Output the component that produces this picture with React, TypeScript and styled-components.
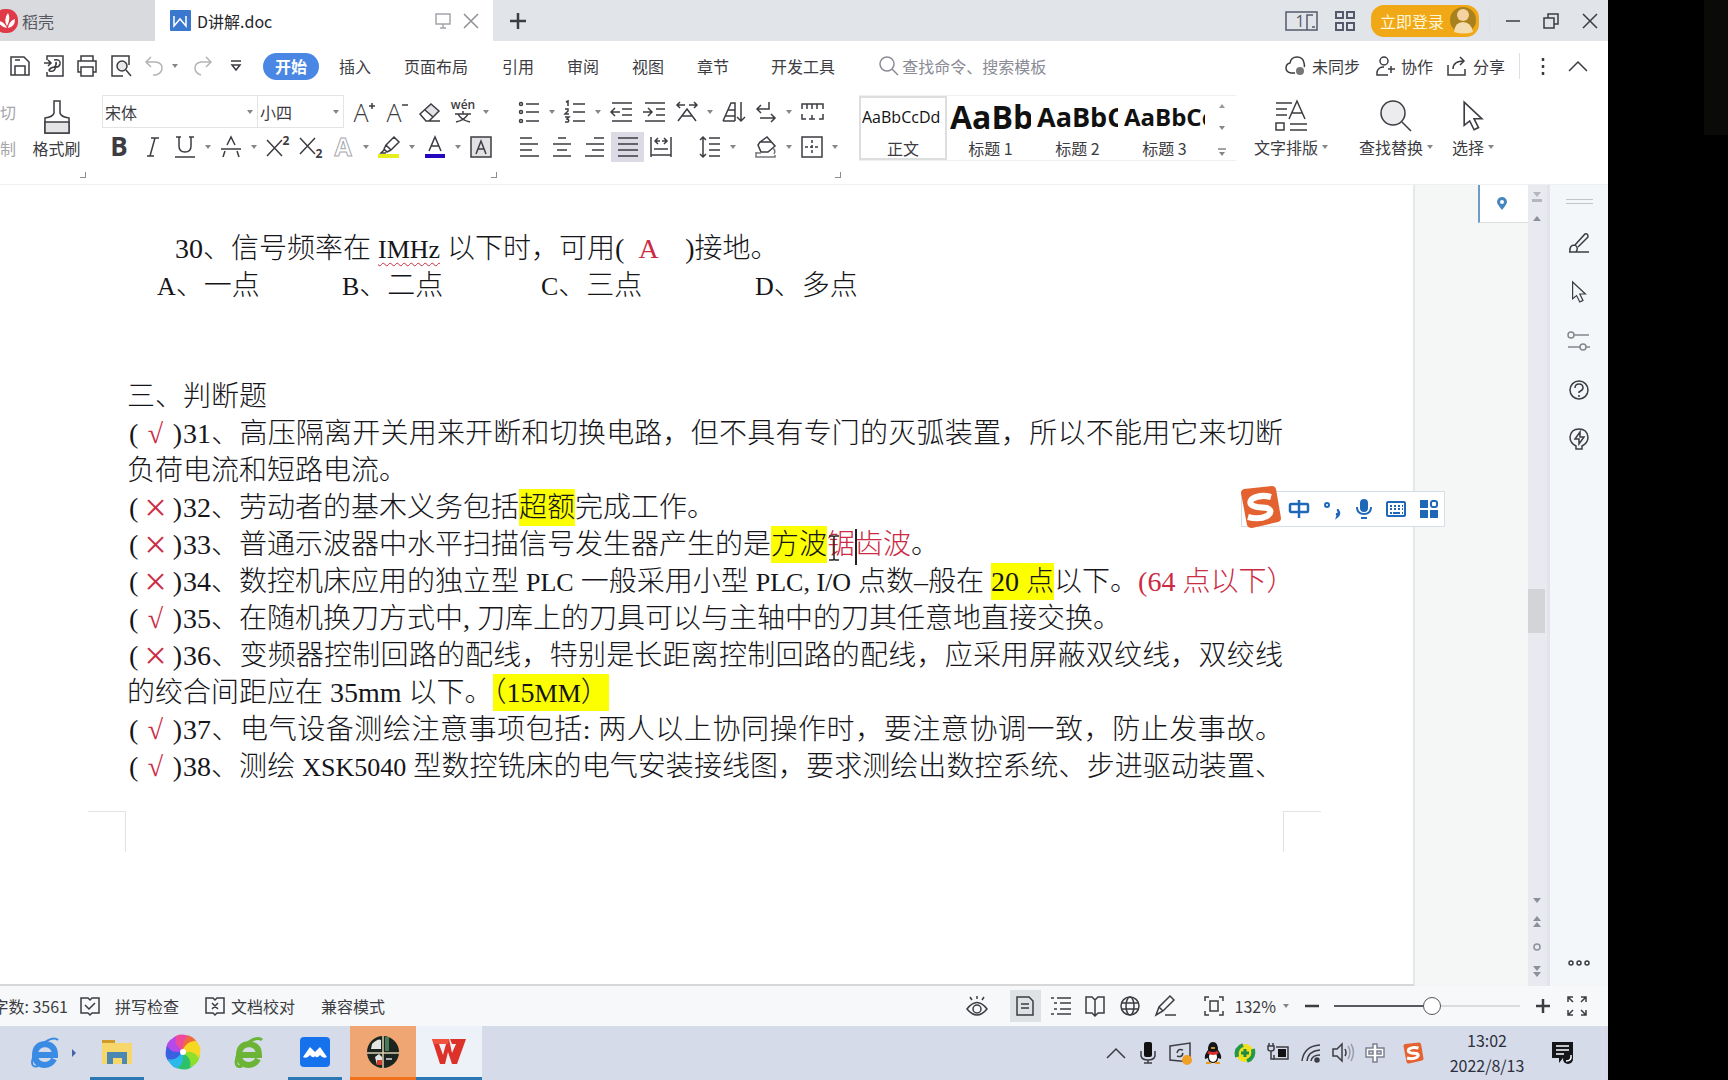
import React from "react";
import styled, { createGlobalStyle, css } from "styled-components";

const UI = '"Noto Sans CJK SC", "Noto Sans", sans-serif';
const INK = "#3c3c42";
const RED = "#cc2b44";

const Global = createGlobalStyle`
  * { box-sizing: border-box; }
  body { margin: 0; background: #000; font-family: ${UI}; font-size: 16px; line-height: 24px; color: ${INK}; }
  button, select, input { font: inherit; color: inherit; }
  button { border: 0; padding: 0; background: none; white-space: nowrap; cursor: pointer; }
  svg { display: block; flex: none; fill: none; stroke: currentColor; stroke-width: 1.5; overflow: visible; }
`;

/* ---------- shared pieces ---------- */

const Screen = styled.div`
  display: flex;
  min-height: 100vh;
  overflow: hidden;
  background: #000;
`;
const Desktop = styled.div`
  flex: 1;
  min-width: 0;
  display: flex;
  flex-direction: column;
  background: #fff;
`;
const Bezel = styled.aside`
  width: 120px;
  display: flex;
  justify-content: flex-end;
  background: #000;
`;
const BezelStrip = styled.div`
  width: 24px;
  height: 135px;
  background: #0a0a08;
`;
const Spacer = styled.div`
  flex: 1;
`;
const Gap = styled.div<{ $w: number }>`
  width: ${(p) => p.$w}px;
  flex: none;
`;
const Rule = styled.div<{ $h: number }>`
  width: 1px;
  height: ${(p) => p.$h}px;
  flex: none;
  background: #dddfe4;
`;
const Caret = styled.i`
  flex: none;
  width: 0;
  height: 0;
  border: 3px solid transparent;
  border-top: 4px solid #85858c;
  border-bottom: 0;
`;
const IconButton = styled.button<{ $w?: number; $tone?: string }>`
  flex: none;
  width: ${(p) => p.$w ?? 33}px;
  height: 30px;
  display: flex;
  align-items: center;
  justify-content: center;
  color: ${(p) => p.$tone ?? INK};
`;

type SvgProps = { w?: number; h?: number; children: React.ReactNode; sw?: number };
const Svg = ({ w = 22, h = 22, sw = 1.5, children }: SvgProps) => (
  <svg width={w} height={h} viewBox={`0 0 ${w} ${h}`} style={{ strokeWidth: sw }} aria-hidden="true">
    {children}
  </svg>
);

/* ---------- title bar ---------- */

const TitleBar = styled.header`
  height: 41px;
  display: flex;
  align-items: center;
  background: #e1e4e8;
  color: #55565f;
`;
const Tab = styled.div<{ $active?: boolean }>`
  align-self: stretch;
  display: flex;
  align-items: center;
  ${(p) =>
    p.$active
      ? css`
          width: 338px;
          gap: 8px;
          padding: 0 12px 0 15px;
          background: #fff;
          color: #26262b;
        `
      : css`
          width: 155px;
          gap: 4px;
          background: #d9dadd;
        `}
`;
const TabName = styled.button`
  display: flex;
  align-items: center;
  gap: 6px;
  line-height: 24px;
`;
const DocerLogo = styled.span`
  width: 18px;
  overflow: hidden;
  display: flex;
  justify-content: flex-end;
`;
const Login = styled.button`
  width: 108px;
  height: 32px;
  padding: 0 2px 0 9px;
  display: flex;
  align-items: center;
  justify-content: space-between;
  border-radius: 13px;
  background: #f0a816;
  color: #fff6d8;
`;

/* ---------- menu row ---------- */

const MenuBar = styled.nav`
  height: 52px;
  display: flex;
  align-items: center;
  padding-bottom: 2px;
`;
const MenuItem = styled.button<{ $active?: boolean }>`
  flex: none;
  height: 27px;
  line-height: 24px;
  padding: 0 12px;
  border-radius: 14px;
  ${(p) =>
    p.$active &&
    css`
      background: #4a87e4;
      color: #fff;
      font-weight: 700;
    `}
`;
const SearchBox = styled.label`
  display: flex;
  align-items: center;
  gap: 3px;
  color: #8b8b95;
  input {
    width: 180px;
    border: 0;
    padding: 0;
    outline: 0;
    background: none;
  }
  input::placeholder {
    color: #8b8b95;
    opacity: 1;
  }
`;
const Action = styled.button`
  display: flex;
  align-items: center;
  gap: 6px;
`;

/* ---------- ribbon ---------- */

const Ribbon = styled.section`
  height: 92px;
  display: flex;
  border-bottom: 1px solid #eeeff0;
`;
const Group = styled.div`
  flex: none;
  display: flex;
  flex-direction: column;
  padding-top: 1px;
`;
const PainterGroup = styled(Group)`
  width: 59px;
`;
const ToolRow = styled.div`
  display: flex;
  align-items: center;
  height: 35px;
`;
const ToolBox = styled.div`
  display: flex;
  align-items: center;
  flex: none;
`;
const ToolButton = styled.button<{ $on?: boolean; $tone?: string }>`
  width: 33px;
  height: 30px;
  display: flex;
  align-items: center;
  justify-content: center;
  color: ${(p) => p.$tone ?? INK};
  background: ${(p) => (p.$on ? "#dcdae5" : "none")};
`;
const CaretCell = styled.span`
  width: 13px;
  display: flex;
  justify-content: center;
`;
const Corner = styled.span`
  align-self: flex-end;
  width: 6px;
  height: 6px;
  margin-top: 8px;
  border: solid #8c8c92;
  border-width: 0 1px 1px 0;
`;
const Combo = styled.span<{ $w: number }>`
  width: ${(p) => p.$w}px;
  height: 33px;
  display: flex;
  align-items: center;
  padding-right: 4px;
  border: 1px solid #e2e4e6;
  & + & {
    border-left: 0;
  }
  select {
    flex: 1;
    min-width: 0;
    appearance: none;
    border: 0;
    padding: 0 2px;
    background: none;
    outline: 0;
  }
`;
const Clip = styled.div`
  width: 16px;
  display: flex;
  flex-direction: column;
  padding-top: 7px;
  gap: 12px;
  overflow: hidden;
  color: #a5a5aa;
`;
const ClipButton = styled.button`
  display: flex;
  justify-content: flex-end;
  height: 24px;
  line-height: 24px;
`;
const BigTool = styled.button`
  flex: none;
  display: flex;
  flex-direction: column;
  align-items: center;
  padding-top: 4px;
  height: 70px;
  color: ${INK};
`;
const BigIcon = styled.span`
  height: 38px;
  display: flex;
  align-items: center;
`;
const BigLabel = styled.span`
  display: flex;
  align-items: center;
  gap: 4px;
  line-height: 24px;
`;
const Gallery = styled.div`
  flex: none;
  display: flex;
  height: 66px;
  margin-top: 2px;
  border: solid #eeeff0;
  border-width: 1px 0;
`;
const StyleCard = styled.button<{ $on?: boolean }>`
  width: ${(p) => (p.$on ? 88 : 87)}px;
  padding: 0 3px;
  overflow: hidden;
  outline: ${(p) => (p.$on ? "2px solid #dcdfde" : "none")};
  outline-offset: -2px;
`;
const Sample = styled.span<{ $size: number; $bold?: boolean }>`
  display: block;
  height: 40px;
  line-height: 40px;
  overflow: hidden;
  text-align: left;
  color: #111;
  font-family: "Open Sans", "Noto Sans", sans-serif;
  font-size: ${(p) => p.$size}px;
  font-weight: ${(p) => (p.$bold ? 700 : 400)};
`;
const StyleName = styled.span`
  display: block;
  line-height: 22px;
`;
const GalleryArrows = styled.div`
  width: 28px;
  display: flex;
  flex-direction: column;
  align-items: center;
  justify-content: space-between;
  padding: 8px 0 4px;
  color: #85858c;
`;

/* ---------- document ---------- */

const Workspace = styled.main`
  flex: 1;
  display: flex;
  position: relative;
  background: #f5f7f7;
`;
const Paper = styled.article`
  flex: 1;
  min-width: 0;
  display: flex;
  flex-direction: column;
  background: #fff;
  border-right: 2px solid #e6e7e7;
  border-bottom: 2px solid #d6d7d6;
`;
const Body = styled.div`
  padding: 45px 130px 26px 127px;
  font-family: "Liberation Serif", "Noto Sans CJK SC", serif;
  font-size: 28px;
  font-weight: 300;
  color: #16161a;
`;
const Line = styled.p<{ $fill?: boolean; $indent?: number }>`
  margin: 0;
  height: 37px;
  line-height: 37px;
  white-space: pre;
  padding-left: ${(p) => p.$indent ?? 0}px;
  ${(p) =>
    p.$fill &&
    css`
      white-space: nowrap;
      text-align: justify;
      text-align-last: justify;
    `}
`;
const Heading = styled.h2`
  margin: 0;
  font: inherit;
  line-height: 37px;
`;
const Options = styled.div`
  display: grid;
  grid-template-columns: 185px 199px 214px 1fr;
  padding-left: 30px;
  height: 111px;
  line-height: 37px;
`;
const Mark = styled.span`
  display: inline-flex;
  height: 37px;
  vertical-align: top;
  width: 56px;
  justify-content: space-between;
  align-items: center;
  padding: 0 1px 0 2px;
`;
const Red = styled.span`
  color: ${RED};
`;
const Cross = styled(Red)`
  font-size: 40px;
  line-height: 37px;
`;
const Latin = styled.span<{ $wavy?: boolean }>`
  font-size: 26px;
  ${(p) =>
    p.$wavy &&
    css`
      text-decoration: underline wavy ${RED} 1px;
      text-underline-offset: 4px;
    `}
`;
const Hi = styled.mark`
  padding: 3px 0;
  background: #fbff00;
  color: inherit;
`;
const CaretSpot = styled.span`
  position: relative;
`;
const TextCaret = styled.span`
  position: absolute;
  left: 28px;
  top: 0;
  width: 2px;
  height: 36px;
  background: #222;
`;
const Beam = styled.span`
  position: absolute;
  left: 2px;
  top: 6px;
  color: #222;
`;
const Crops = styled.div`
  display: flex;
  justify-content: space-between;
  padding: 0 92px 0 88px;
`;
const Crop = styled.span<{ $side: "left" | "right" }>`
  width: 38px;
  height: 41px;
  border-top: 1px solid #e2e2e2;
  border-${(p) => (p.$side === "left" ? "right" : "left")}: 1px solid #e2e2e2;
`;
const Margin = styled.div`
  width: 113px;
  display: flex;
  justify-content: flex-end;
  align-items: flex-start;
`;
const PinPanel = styled.button`
  width: 50px;
  height: 38px;
  padding-right: 4px;
  display: flex;
  align-items: center;
  justify-content: center;
  background: #fff;
  border-left: 2px solid #6d9cc8;
  border-bottom: 1px solid #dcdfe2;
`;
const ScrollBar = styled.div`
  width: 22px;
  display: flex;
  flex-direction: column;
  align-items: center;
  padding: 7px 2px 7px 0;
  background: #e9eaf0;
  border-right: 3px solid #e2e4ec;
  color: #8d8f9c;
`;
const Thumb = styled.div`
  width: 17px;
  height: 44px;
  background: #d3d4d8;
`;
const Track = styled.div<{ $grow: number }>`
  flex: ${(p) => p.$grow};
`;
const ScrollMarks = styled.div`
  display: flex;
  flex-direction: column;
  align-items: center;
  gap: 12px;
`;
const SideBar = styled.aside`
  width: 58px;
  display: flex;
  flex-direction: column;
  align-items: center;
  padding: 14px 0 8px;
  background: #f4f7fa;
`;
const Grip = styled.span`
  width: 27px;
  height: 5px;
  border: solid #c3c5c9;
  border-width: 1px 0;
`;
const SideTools = styled.div`
  display: flex;
  flex-direction: column;
  gap: 19px;
  margin-top: 24px;
`;

const Ime = styled.div`
  position: absolute;
  right: 163px;
  top: 306px;
  display: flex;
  align-items: center;
  width: 204px;
  height: 36px;
  padding-left: 40px;
  border: 1px solid #d5dde6;
  background: #fff;
`;
const ImeLogo = styled.span`
  position: absolute;
  left: -4px;
  top: -7px;
`;

/* ---------- status bar ---------- */

const StatusBar = styled.footer`
  height: 40px;
  display: flex;
  align-items: center;
  background: #f6f8f9;
  overflow: hidden;
`;
const Count = styled.span`
  width: 68px;
  display: flex;
  justify-content: flex-end;
  white-space: nowrap;
`;
const StatusItem = styled.button`
  flex: none;
  display: flex;
  align-items: center;
  height: 36px;
`;
const ViewButton = styled(IconButton)<{ $on?: boolean }>`
  height: 32px;
  background: ${(p) => (p.$on ? "#dfe2e5" : "none")};
`;
const Zoom = styled.input`
  appearance: none;
  width: 186px;
  height: 20px;
  margin: 0;
  background: linear-gradient(to right, #58585e 53%, #d9dcdf 53%) center / 100% 2px no-repeat;
  &::-webkit-slider-thumb {
    appearance: none;
    width: 18px;
    height: 18px;
    border: 1px solid #55555b;
    border-radius: 50%;
    background: #fff;
  }
`;

/* ---------- task bar ---------- */

const TaskBar = styled.footer`
  height: 54px;
  display: flex;
  align-items: stretch;
  padding-left: 12px;
  background: #d6dbea;
  color: #1c1f2b;
`;
const TaskButton = styled.button<{ $bg?: string; $line?: string; $full?: boolean }>`
  width: 66px;
  display: flex;
  flex-direction: column;
  align-items: center;
  justify-content: flex-end;
  background: ${(p) => p.$bg ?? "none"};
  &::after {
    content: "";
    width: ${(p) => (p.$full ? "100%" : "54px")};
    height: 3px;
    margin-top: 8px;
    background: ${(p) => p.$line ?? "transparent"};
  }
`;
const Tray = styled.div`
  display: flex;
  align-items: center;
`;
const Clock = styled.time`
  width: 108px;
  text-align: center;
  line-height: 25px;
  font-size: 16px;
  color: #2c2f3c;
`;

/* ---------- tools ---------- */

type ToolDef = { label: string; icon: React.ReactNode; caret?: boolean; on?: boolean; tone?: string };

const Tool = ({ label, icon, caret, on, tone }: ToolDef) => (
  <ToolBox>
    <ToolButton aria-label={label} $on={on} $tone={tone}>
      {icon}
    </ToolButton>
    {caret && (
      <CaretCell>
        <Caret />
      </CaretCell>
    )}
  </ToolBox>
);

type LetterProps = { x: number; y: number; size: number; weight?: number; children: string };
const Letter = ({ x, y, size, weight = 400, children }: LetterProps) => (
  <text
    x={x}
    y={y}
    fontSize={size}
    fontWeight={weight}
    fontFamily="Open Sans, sans-serif"
    textAnchor="middle"
    fill="currentColor"
    stroke="none"
  >
    {children}
  </text>
);

const fontTop: ToolDef[] = [
  {
    label: "增大字号",
    icon: (
      <Svg>
        <Letter x={8} y={21} size={25} weight={300}>A</Letter>
        <path d="M16 5h6M19 2v6" />
      </Svg>
    ),
  },
  {
    label: "减小字号",
    icon: (
      <Svg>
        <Letter x={8} y={21} size={25} weight={300}>A</Letter>
        <path d="M16 4h6" />
      </Svg>
    ),
  },
  {
    label: "清除格式",
    icon: (
      <Svg>
        <path d="M12 3 20 10 13 16 6 9z" fill="#e4e4e6" stroke="none" />
        <path d="M1 13 12 3l8 7-10 10H7zM6 9l8 7M8 20h13" />
      </Svg>
    ),
  },
  {
    label: "拼音指南",
    caret: true,
    icon: (
      <Svg>
        <Letter x={11} y={8} size={12} weight={600}>wén</Letter>
        <path d="M3 13h16M11 10v3M6 13q3 6 12 8M16 13q-3 6-12 8" />
      </Svg>
    ),
  },
];

const fontBottom: ToolDef[] = [
  { label: "加粗", icon: <Svg><Letter x={11} y={20} size={26} weight={700}>B</Letter></Svg> },
  { label: "倾斜", icon: <Svg><path d="M10 2h8M6 20h7M14 2 9 20" /></Svg> },
  { label: "下划线", caret: true, icon: <Svg><path d="M5 1v9q0 6 6 6t6-6V1M2 1h5M15 1h5M1 21h20" /></Svg> },
  {
    label: "删除线",
    caret: true,
    icon: <Svg><path d="M7 9l4-8 4 8M1 13h20M5 15l-2 6M17 15l2 6" /></Svg>,
  },
  { label: "上标", icon: <Svg w={24}><path d="M2 4l15 16M17 4 2 20" /><Letter x={21} y={9} size={12} weight={700}>2</Letter></Svg> },
  { label: "下标", icon: <Svg w={24}><path d="M2 2l15 16M17 2 2 18" /><Letter x={21} y={22} size={12} weight={700}>2</Letter></Svg> },
  {
    label: "文字效果",
    caret: true,
    tone: "#a9a9ae",
    icon: (
      <Svg>
        <text x="11" y="20" fontSize="25" fontWeight="700" fontFamily="Open Sans" textAnchor="middle" fill="#fff" strokeWidth="1">A</text>
      </Svg>
    ),
  },
  {
    label: "突出显示",
    caret: true,
    icon: (
      <Svg>
        <path d="M0 18h21v4H0z" fill="#e6ee1c" stroke="none" />
        <path d="M8 9l8-8 5 5-8 8zM8 9l-2 4 3 3 4-2M6 14l-3 3h5" />
      </Svg>
    ),
  },
  {
    label: "字体颜色",
    caret: true,
    icon: (
      <Svg>
        <path d="M1 18h20v4H1z" fill="#2408c0" stroke="none" />
        <path d="M5 15l6-14 6 14M7 10h8" />
      </Svg>
    ),
  },
  {
    label: "字符底纹",
    icon: (
      <Svg>
        <path d="M1 1h20v20H1z" fill="#e2e2e4" />
        <path d="M6 18l5-13 5 13M8 13h6" />
      </Svg>
    ),
  },
];

const paraTop: ToolDef[] = [
  {
    label: "项目符号",
    caret: true,
    icon: <Svg><path d="M8 3h13M8 11h13M8 20h13" /><circle cx="3" cy="3" r="1.5" /><circle cx="3" cy="11" r="1.5" /><circle cx="3" cy="20" r="1.5" /></Svg>,
  },
  {
    label: "编号",
    caret: true,
    icon: (
      <Svg>
        <path d="M9 3h12M9 11h12M9 20h12M2 1l2-1v5M1 8h3v2L1 13h4M1 16h4l-2 2q3 1 1 3H1" />
      </Svg>
    ),
  },
  { label: "减少缩进", icon: <Svg><path d="M2 2h20M12 8h10M12 14h10M2 20h20M1 11h9M5 7l-4 4 4 4" /></Svg> },
  { label: "增加缩进", icon: <Svg><path d="M2 2h20M13 8h9M13 14h9M2 20h20M0 11h9M5 7l4 4-4 4" /></Svg> },
  { label: "中文版式", caret: true, icon: <Svg><path d="M2 20 11 8l9 12M6 15h10M1 4h8M4 1 1 4l3 3M21 4h-8M18 1l3 3-3 3" /></Svg> },
  { label: "排序", icon: <Svg><path d="M1 20 9 2h4v18M3 15h10M6 9h7M1 20h12M19 1v19M15 16l4 4 4-4" /></Svg> },
  { label: "换行", caret: true, icon: <Svg><path d="M14 1v7H2M6 4 2 8l4 4M5 17h15M16 13l4 4-4 4" /></Svg> },
  { label: "标尺", icon: <Svg><path d="M1 8V3h21v5M6 3v5M11 3v5M16 3v5M1 13v5h4M18 18h4v-5M8 18h6M11 14v4" /></Svg> },
];

const alignTools: ToolDef[] = [
  { label: "左对齐", icon: <Svg><path d="M2 2h12M2 8h18M2 14h12M2 20h19" /></Svg> },
  { label: "居中", icon: <Svg><path d="M7 2h8M2 8h18M6 14h10M2 20h18" /></Svg> },
  { label: "右对齐", icon: <Svg><path d="M10 2h10M2 8h18M8 14h12M1 20h19" /></Svg> },
  { label: "两端对齐", on: true, icon: <Svg><path d="M1 2h20M1 8h20M1 14h20M1 20h20" /></Svg> },
  { label: "分散对齐", icon: <Svg><path d="M1 1v20M21 1v20M4 13h14M1 19h20M5 5h5M12 5h5M8 2 5 5l3 3M14 2l3 3-3 3" /></Svg> },
];
const spaceTools: ToolDef[] = [
  { label: "行距", caret: true, icon: <Svg><path d="M4 1v20M1 4l3-3 3 3M1 18l3 3 3-3M10 2h11M10 8h11M10 14h11M10 20h11" /></Svg> },
];
const fillTools: ToolDef[] = [
  { label: "底纹颜色", caret: true, icon: <Svg><path d="M5 6 12 1l8 9-7 6H6L3 9l2-3h11" /><path d="M18 12q3 3 1 6M1 16v5h19v-2M1 17h5" stroke="#77777c" /></Svg> },
  { label: "边框", caret: true, icon: <Svg><path d="M1 1h20v20H1z" /><path d="M11 4v14M4 11h14" strokeDasharray="3 2" /></Svg> },
];

const menu = ["插入", "页面布局", "引用", "审阅", "视图", "章节", "开发工具"];
const menuGaps = [8, 9, 10, 9, 9, 9, 18];

const Arrow = ({ size = 22 }: { size?: number }) => (
  <svg width={size} height={Math.round(size * 1.35)} viewBox="0 0 20 27" aria-hidden="true">
    <path d="M2 1v21l5-4 4 8 4-2-4-8h7z" />
  </svg>
);

const Sogou = ({ size }: { size: number }) => (
  <svg width={size} height={size} viewBox="0 0 44 44" aria-hidden="true">
    <path d="M3 8q0-3 3-4L34 1q3 0 4 3l5 29q0 3-3 4L14 43q-4 0-5-3z" fill="#e3622f" stroke="none" />
    <path d="M33 12q-11-3-19 2-5 6 5 8l10 1q7 3 0 8-8 4-19 1" stroke="#fff" style={{ strokeWidth: 6 }} />
  </svg>
);

const Zhong = ({ color }: { color: string }) => (
  <svg width="20" height="20" viewBox="0 0 20 20" style={{ strokeWidth: 2.5 }} stroke={color} aria-hidden="true">
    <rect x="1" y="5" width="18" height="8" rx="1" />
    <path d="M10 1v18" />
  </svg>
);

/* ---------- page ---------- */

const Title = () => (
  <TitleBar>
    <Tab>
      <DocerLogo>
        <svg width="24" height="24" viewBox="0 0 24 24" aria-hidden="true">
          <rect width="24" height="24" rx="11" fill="#e03a48" stroke="none" />
          <path d="M13 19Q6 18 4 12q6 0 9 7zM13 17Q9 10 14 4q3 6-1 13zM14 19q1-7 7-9 0 8-7 9z" fill="#fff" stroke="none" />
        </svg>
      </DocerLogo>
      <TabName>稻壳</TabName>
    </Tab>
    <Tab $active>
      <TabName>
        <svg width="21" height="21" viewBox="0 0 21 21" aria-hidden="true">
          <rect width="21" height="21" rx="1" fill="#3a78d0" stroke="none" />
          <path d="M4 6v10l6-7 6 7V6" stroke="#fff" />
        </svg>
        D讲解.doc
      </TabName>
      <Spacer />
      <IconButton $w={20} $tone="#a4a5aa" aria-label="在窗口中显示">
        <Svg w={16} h={16}><path d="M1 1h14v10H1zM8 11v4M5 15h6" /></Svg>
      </IconButton>
      <IconButton $w={20} $tone="#8f9096" aria-label="关闭标签">
        <Svg w={16} h={16}><path d="M1 1l14 14M15 1 1 15" /></Svg>
      </IconButton>
    </Tab>
    <Gap $w={8} />
    <IconButton aria-label="新建标签">
      <Svg w={16} h={16} sw={2.5}><path d="M8 0v16M0 8h16" /></Svg>
    </IconButton>
    <Spacer />
    <IconButton $w={34} $tone="#55586a" aria-label="布局">
      <Svg w={33} h={20}>
        <path d="M1 1h31v18H1zM22 19V4h6M27 16h3" />
        <Letter x={15} y={16} size={16}>1</Letter>
      </Svg>
    </IconButton>
    <Gap $w={10} />
    <IconButton $tone="#55586a" aria-label="应用">
      <Svg w={20} h={20} sw={2}><path d="M1 1h7v6H1zM12 1h7v6h-7zM1 12h7v7H1zM12 12h7v7h-7z" /></Svg>
    </IconButton>
    <Gap $w={10} />
    <Login>
      立即登录
      <svg width="27" height="27" viewBox="0 0 27 27" aria-hidden="true">
        <circle cx="13" cy="13" r="13" fill="#a8801c" stroke="none" />
        <circle cx="13" cy="8" r="6" fill="#f4d3a0" stroke="none" />
        <path d="M4 25q1-10 9-10t10 10q-9 3-19 0z" fill="#f3dcae" stroke="none" />
      </svg>
    </Login>
    <Gap $w={10} />
    <Rule $h={24} />
    <Gap $w={6} />
    <IconButton aria-label="最小化"><Svg w={14} h={16}><path d="M0 8h14" /></Svg></IconButton>
    <Gap $w={4} />
    <IconButton $w={36} aria-label="还原"><Svg w={16} h={16}><path d="M1 5h10v10H1zM5 5V1h10v10h-4" /></Svg></IconButton>
    <Gap $w={4} />
    <IconButton aria-label="关闭"><Svg w={14} h={14}><path d="M0 0l14 14M14 0 0 14" /></Svg></IconButton>
    <Gap $w={2} />
  </TitleBar>
);

const Menu = () => (
  <MenuBar>
    <Gap $w={3} />
    <IconButton aria-label="保存"><Svg w={20} h={20}><path d="M1 1h13l5 5v13H1zM5 19v-9h10v9M5 4h5" /></Svg></IconButton>
    <IconButton $w={36} aria-label="输出为PDF">
      <Svg w={20}><path d="M3 5V1h16v20H3v-4M0 8h7M4 5l3 3-3 3" /><path d="M10 5q7-1 6 4-1 4-6 3 3-2 2-5 0 8-3 9-4 1-4-1 2-3 6-3" /></Svg>
    </IconButton>
    <IconButton $w={30} aria-label="打印"><Svg w={20}><path d="M4 6V1h12v5M4 17H1V6h18v11h-3M4 12h12v9H4z" /></Svg></IconButton>
    <IconButton $w={38} aria-label="打印预览"><Svg w={20}><path d="M18 10V1H1v20h11M15 15l5 6" /><circle cx="11" cy="11" r="5" fill="#e8e8ea" /></Svg></IconButton>
    <IconButton $w={28} $tone="#b4b4b8" aria-label="撤销"><Svg w={18} h={20}><path d="M1 6h10q6 1 6 6t-6 7H8M6 1 1 6l5 5" /></Svg></IconButton>
    <Gap $w={4} />
    <Caret />
    <Gap $w={8} />
    <IconButton $tone="#b4b4b8" aria-label="恢复"><Svg w={18} h={20}><path d="M17 6H7q-6 1-6 6t6 7M12 1l5 5-5 5" /></Svg></IconButton>
    <IconButton aria-label="自定义工具栏"><Svg w={10} h={10}><path d="M0 0h10M1 4h8l-4 5z" /></Svg></IconButton>
    <Gap $w={11} />
    <MenuItem $active>开始</MenuItem>
    {menu.map((m, i) => (
      <React.Fragment key={m}>
        <Gap $w={menuGaps[i]} />
        <MenuItem>{m}</MenuItem>
      </React.Fragment>
    ))}
    <Gap $w={32} />
    <SearchBox>
      <Svg w={20} h={20}><circle cx="8" cy="8" r="7" /><path d="M13 13l6 6" /></Svg>
      <input placeholder="查找命令、搜索模板" aria-label="查找命令、搜索模板" />
    </SearchBox>
    <Spacer />
    <Action>
      <Svg w={21} h={20}>
        <path d="M10 17H6q-5-1-5-5t4-5q1-6 7-6t7 6q1 3 0 4" />
        <circle cx="15" cy="15" r="4" fill="#777" stroke="none" />
      </Svg>
      未同步
    </Action>
    <Gap $w={16} />
    <Action>
      <Svg w={19} h={20}><circle cx="8" cy="5" r="4" /><path d="M12 19H1v-3q1-5 7-5M12 13h7M15 10v7" /></Svg>
      协作
    </Action>
    <Gap $w={14} />
    <Action>
      <Svg w={20} h={20}><path d="M1 9v10h17v-6M6 13q0-8 11-8M13 1l4 4-4 4" /></Svg>
      分享
    </Action>
    <Gap $w={14} />
    <Rule $h={26} />
    <Gap $w={6} />
    <IconButton aria-label="更多"><Svg w={4} h={18} sw={2.5}><path d="M2 1v3M2 8v3M2 15v3" /></Svg></IconButton>
    <Gap $w={3} />
    <IconButton $w={32} aria-label="收起功能区"><Svg w={18} h={10}><path d="M0 10l9-9 9 9" /></Svg></IconButton>
    <Gap $w={14} />
  </MenuBar>
);

const RibbonBar = () => (
  <Ribbon>
    <Clip>
      <ClipButton>剪切</ClipButton>
      <ClipButton>复制</ClipButton>
    </Clip>
    <Gap $w={11} />
    <PainterGroup>
      <BigTool>
        <BigIcon>
          <Svg w={26} h={34}><path d="M10 1h6v12q1 4 9 5v15H1V18q8-1 9-5z" /><path d="M1 22h24v11H1z" fill="#e4e4e6" /></Svg>
        </BigIcon>
        <BigLabel>格式刷</BigLabel>
      </BigTool>
      <Corner />
    </PainterGroup>
    <Gap $w={16} />
    <Group>
      <ToolRow>
        <Combo $w={156}>
          <select aria-label="字体"><option>宋体</option></select>
          <Caret />
        </Combo>
        <Combo $w={86}>
          <select aria-label="字号"><option>小四</option></select>
          <Caret />
        </Combo>
        <Gap $w={3} />
        {fontTop.map((t) => <Tool key={t.label} {...t} />)}
      </ToolRow>
      <ToolRow>{fontBottom.map((t) => <Tool key={t.label} {...t} />)}</ToolRow>
      <Corner />
    </Group>
    <Gap $w={15} />
    <Group>
      <ToolRow>{paraTop.map((t) => <Tool key={t.label} {...t} />)}</ToolRow>
      <ToolRow>
        {alignTools.map((t) => <Tool key={t.label} {...t} />)}
        <Gap $w={16} />
        {spaceTools.map((t) => <Tool key={t.label} {...t} />)}
        <Gap $w={10} />
        {fillTools.map((t) => <Tool key={t.label} {...t} />)}
      </ToolRow>
      <Corner />
    </Group>
    <Gap $w={18} />
    <Gallery>
      <StyleCard $on><Sample $size={16}>AaBbCcDd</Sample><StyleName>正文</StyleName></StyleCard>
      <StyleCard><Sample $size={32} $bold>AaBb</Sample><StyleName>标题 1</StyleName></StyleCard>
      <StyleCard><Sample $size={27} $bold>AaBbC</Sample><StyleName>标题 2</StyleName></StyleCard>
      <StyleCard><Sample $size={24} $bold>AaBbCc</Sample><StyleName>标题 3</StyleName></StyleCard>
      <GalleryArrows>
        <Svg w={6} h={4}><path d="M0 4l3-4 3 4z" fill="#99999f" stroke="none" /></Svg>
        <Caret />
        <Svg w={8} h={8}><path d="M0 1h8" /><path d="M1 4h6l-3 4z" fill="currentColor" stroke="none" /></Svg>
      </GalleryArrows>
    </Gallery>
    <Gap $w={18} />
    <BigTool>
      <BigIcon><Svg w={32} h={32}><path d="M1 3h16M1 9h11M1 15h11M14 19l8-18 8 18M17 13h10M1 23h8v7H1zM15 24h17M15 30h17" /></Svg></BigIcon>
      <BigLabel>文字排版<Caret /></BigLabel>
    </BigTool>
    <Gap $w={31} />
    <BigTool>
      <BigIcon><Svg w={32} h={32}><circle cx="13" cy="13" r="12" fill="#ececee" /><path d="M22 22l9 9" /></Svg></BigIcon>
      <BigLabel>查找替换<Caret /></BigLabel>
    </BigTool>
    <Gap $w={19} />
    <BigTool>
      <BigIcon><Arrow /></BigIcon>
      <BigLabel>选择<Caret /></BigLabel>
    </BigTool>
  </Ribbon>
);

const Judge = ({ ok }: { ok?: boolean }) => (
  <Mark>
    <span>(</span>
    {ok ? <Red>√</Red> : <Cross>×</Cross>}
    <span>)</span>
  </Mark>
);

const Document = () => (
  <Paper>
    <Body>
      <Line $indent={48}>
        30、信号频率在 <Latin $wavy>IMHz</Latin> 以下时，可用({"  "}<Red>A</Red>{"    "})接地。
      </Line>
      <Options>
        <span><Latin>A</Latin>、一点</span>
        <span><Latin>B</Latin>、二点</span>
        <span><Latin>C</Latin>、三点</span>
        <span><Latin>D</Latin>、多点</span>
      </Options>
      <Heading>三、判断题</Heading>
      <Line $fill><Judge ok />31、高压隔离开关用来开断和切换电路，但不具有专门的灭弧装置，所以不能用它来切断</Line>
      <Line>负荷电流和短路电流。</Line>
      <Line><Judge />32、劳动者的基木义务包括<Hi>超额</Hi>完成工作。</Line>
      <Line>
        <Judge />33、普通示波器中水平扫描信号发生器产生的是<Hi>方波</Hi>
        <CaretSpot>
          <Red>锯齿波</Red>
          <Beam><Svg w={10} h={26}><path d="M0 1h4l1 1 1-1h4M5 2v22M0 25h4l1-1 1 1h4" /></Svg></Beam>
          <TextCaret />
        </CaretSpot>
        。
      </Line>
      <Line $fill>
        <Judge />34、数控机床应用的独立型 <Latin>PLC</Latin> 一般采用小型 <Latin>PLC, I/O</Latin> 点数–般在 <Hi>20 点</Hi>以下。<Red>(64 点以下）</Red>
      </Line>
      <Line><Judge ok />35、在随机换刀方式中, 刀库上的刀具可以与主轴中的刀其任意地直接交换。</Line>
      <Line $fill><Judge />36、变频器控制回路的配线，特别是长距离控制回路的配线，应采用屏蔽双纹线，双绞线</Line>
      <Line>的绞合间距应在 35mm 以下。<Hi>（15<Latin>MM</Latin>）</Hi></Line>
      <Line $fill><Judge ok />37、电气设备测绘注意事项包括: 两人以上协同操作时，要注意协调一致，防止发事故。</Line>
      <Line $fill><Judge ok />38、测绘 <Latin>XSK5040</Latin> 型数控铣床的电气安装接线图，要求测绘出数控系统、步进驱动装置、</Line>
    </Body>
    <Crops>
      <Crop $side="left" />
      <Crop $side="right" />
    </Crops>
  </Paper>
);

const Side = () => (
  <>
    <Margin>
      <PinPanel aria-label="定位">
        <Svg w={10} h={13}><path d="M5 13Q0 7 0 5a5 5 0 0 1 10 0q0 2-5 8z" fill="#4785bd" stroke="none" /><circle cx="5" cy="5" r="2" fill="#fff" stroke="none" /></Svg>
      </PinPanel>
    </Margin>
    <ScrollBar>
      <ScrollMarks>
        <Svg w={10} h={12}><path d="M1 0h8L5 5zM0 7h10v3H0z" fill="#b5b6bf" stroke="none" /></Svg>
        <Svg w={8} h={5}><path d="M0 5l4-5 4 5z" fill="currentColor" stroke="none" /></Svg>
      </ScrollMarks>
      <Track $grow={366} />
      <Thumb />
      <Track $grow={264} />
      <ScrollMarks>
        <Svg w={8} h={5}><path d="M0 0h8L4 5z" fill="currentColor" stroke="none" /></Svg>
        <Svg w={8} h={14}><path d="M0 6l4-5 4 5zM0 12l4-5 4 5z" fill="currentColor" stroke="none" /></Svg>
        <Svg w={8} h={12}><circle cx="4" cy="6" r="3" /></Svg>
        <Svg w={8} h={14}><path d="M0 1h8L4 6zM0 7h8l-4 5z" fill="currentColor" stroke="none" /></Svg>
      </ScrollMarks>
    </ScrollBar>
    <SideBar>
      <Grip />
      <SideTools>
        <IconButton aria-label="样式"><Svg w={20} h={20}><path d="M0 19h20M1 19q-1-7 5-7 4 3 1 7M6 12 16 1q3-1 3 3L9 14" /></Svg></IconButton>
        <IconButton aria-label="选择窗格"><Arrow size={16} /></IconButton>
        <IconButton $tone="#85878c" aria-label="属性"><Svg w={22} h={20}><circle cx="3" cy="4" r="3" /><path d="M6 4h15M0 16h12M18 16h4" /><circle cx="15" cy="16" r="3" /></Svg></IconButton>
        <IconButton aria-label="帮助"><Svg w={20} h={20}><circle cx="10" cy="10" r="9" /><path d="M6 8q0-4 4-4t4 4q0 2-4 4v1M10 15v2" /></Svg></IconButton>
        <IconButton aria-label="推荐"><Svg w={20}><path d="M7 18q-6-3-6-9 1-8 9-8t9 8q0 6-6 9v3H7zM11 4l-5 7h4v5l5-7h-4z" /></Svg></IconButton>
      </SideTools>
      <Spacer />
      <IconButton aria-label="更多工具"><Svg w={22} h={6}><circle cx="3" cy="3" r="2" /><circle cx="11" cy="3" r="2" /><circle cx="19" cy="3" r="2" /></Svg></IconButton>
    </SideBar>
  </>
);

const BLUE = "#1f68b8";
const ImeBar = () => (
  <Ime>
    <ImeLogo><Sogou size={44} /></ImeLogo>
    <IconButton $tone={BLUE} aria-label="中文输入"><Zhong color={BLUE} /></IconButton>
    <IconButton $tone={BLUE} aria-label="中文标点">
      <Svg w={16} h={16} sw={2}><circle cx="3" cy="4" r="2" /><path d="M13 9a2 2 0 1 1-1 4q2 0 1 3 4-3 1-7z" fill="currentColor" /></Svg>
    </IconButton>
    <IconButton $w={31} $tone={BLUE} aria-label="语音">
      <Svg w={16} h={20} sw={2}><rect x="5" y="1" width="6" height="11" rx="3" fill="currentColor" /><path d="M1 8q0 7 7 7t7-7M5 19h6" /></Svg>
    </IconButton>
    <IconButton $tone={BLUE} aria-label="软键盘">
      <Svg w={20} h={16} sw={2}><rect x="1" y="1" width="18" height="14" rx="1" /><path d="M4 5h2M8 5h2M12 5h2M16 5h1M4 8h2M8 8h2M12 8h2M16 8h1M4 12h2M7 12h7M16 12h1" /></Svg>
    </IconButton>
    <IconButton $tone={BLUE} aria-label="工具箱">
      <Svg w={18} h={18} sw={2}><path d="M0 0h8v8H0zM0 10h8v8H0zM10 10h8v8h-8z" fill="currentColor" stroke="none" /><rect x="11" y="1" width="6" height="6" rx="2" /></Svg>
    </IconButton>
  </Ime>
);

const Status = () => (
  <StatusBar>
    <Count>字数: 3561</Count>
    <Gap $w={12} />
    <StatusItem>
      <Svg w={20} h={20}><path d="M1 2h7l2 2 2-2h7v15h-7l-2 2-2-2H1zM5 9l4 4 6-6" /></Svg>
      <Gap $w={15} />
      拼写检查
    </StatusItem>
    <Gap $w={26} />
    <StatusItem>
      <Svg w={20} h={20}><path d="M1 2h7l2 2 2-2h7v15h-7l-2 2-2-2H1zM7 7l6 6M13 7l-6 6" /></Svg>
      <Gap $w={6} />
      文档校对
    </StatusItem>
    <Gap $w={26} />
    <StatusItem>兼容模式</StatusItem>
    <Spacer />
    <ViewButton aria-label="护眼模式"><Svg><path d="M1 14q10-13 20 0-10 12-20 0zM11 1v3M4 2l2 3M18 2l-2 3" /><circle cx="11" cy="14" r="4" /></Svg></ViewButton>
    <Gap $w={16} />
    <ViewButton $w={31} $on aria-label="页面视图"><Svg w={18} h={20}><path d="M1 1h12l4 4v14H1zM5 8h8M5 12h8" /></Svg></ViewButton>
    <Gap $w={2} />
    <ViewButton $w={36} aria-label="大纲"><Svg w={20} h={20}><path d="M0 2h3M6 2h14M3 7h3M9 7h11M3 13h3M9 13h11M0 18h3M6 18h14" /></Svg></ViewButton>
    <ViewButton aria-label="阅读版式"><Svg w={20}><path d="M1 2h6l3 3 3-3h6v16h-6l-3 3-3-3H1zM10 5v16" /></Svg></ViewButton>
    <Gap $w={2} />
    <ViewButton aria-label="Web版式"><Svg w={20} h={20}><circle cx="10" cy="10" r="9" /><ellipse cx="10" cy="10" rx="4" ry="9" /><path d="M2 7h16M2 13h16" /></Svg></ViewButton>
    <Gap $w={3} />
    <ViewButton aria-label="写作模式"><Svg><path d="M1 20l3-8L15 1l4 4L8 16zM4 12l4 4M10 20h11" /></Svg></ViewButton>
    <Gap $w={15} />
    <ViewButton aria-label="适应窗口"><Svg w={20} h={20}><path d="M1 5V1h4M15 1h4v4M19 15v4h-4M5 19H1v-4M6 5h8v10H6z" /></Svg></ViewButton>
    <Gap $w={4} />
    <StatusItem>132%<Gap $w={7} /><Caret /></StatusItem>
    <Gap $w={6} />
    <ViewButton aria-label="缩小"><Svg w={16} h={16} sw={2.5}><path d="M1 8h14" /></Svg></ViewButton>
    <Gap $w={6} />
    <Zoom type="range" min={0} max={100} defaultValue={53} aria-label="缩放比例" />
    <Gap $w={6} />
    <ViewButton aria-label="放大"><Svg w={16} h={16} sw={2.5}><path d="M1 8h14M8 1v14" /></Svg></ViewButton>
    <ViewButton aria-label="全屏" $w={36}><Svg w={20} h={20}><path d="M1 6V1h5M1 1l5 5M14 1h5v5M19 1l-5 5M1 14v5h5M1 19l5-5M19 14v5h-5M19 19l-5-5" /></Svg></ViewButton>
    <Gap $w={13} />
  </StatusBar>
);

const wheel = ["#f06a3c", "#f04a9c", "#b44ae8", "#3a62e0", "#2cb8e8", "#2cc26a", "#8ee02c", "#f6d824"];

const EIcon = ({ color, leaf }: { color: string; leaf?: boolean }) => (
  <svg width="30" height="34" viewBox="0 0 30 34" aria-hidden="true">
    <path d="M24 24q-3 6-10 6-9-1-9-10 0-10 10-11 10 1 10 11H8" stroke={color} style={{ strokeWidth: 6 }} />
    <path d="M28 5q-4-4-13 2Q3 15 2 27q0 6 6 4" stroke={color} style={{ strokeWidth: leaf ? 3 : 2 }} />
  </svg>
);

const Task = () => (
  <TaskBar>
    <TaskButton aria-label="Internet Explorer"><EIcon color="#3a8be4" /></TaskButton>
    <Svg w={6} h={54}><path d="M-6 23l4 4-4 4z" fill="#3f66a8" stroke="none" /></Svg>
    <TaskButton $line="#2b78b4" aria-label="文件资源管理器">
      <svg width="32" height="30" viewBox="0 0 32 30" aria-hidden="true">
        <path d="M1 1h13v6H1z" fill="#cf9c28" stroke="none" />
        <path d="M1 4h30v21H1z" fill="#f7d66c" stroke="none" />
        <path d="M6 13h20v12h-5v-6h-9v6H6z" fill="#4b87b0" stroke="none" />
      </svg>
    </TaskButton>
    <TaskButton aria-label="浏览器">
      <svg width="34" height="34" viewBox="-17 -17 34 34" aria-hidden="true">
        {wheel.map((c, i) => (
          <path key={c} d="M0 0Q-5-8 1-16 10-17 14-8 6-10 0 0z" fill={c} stroke={c} transform={`rotate(${i * -45})`} />
        ))}
        <circle r="3" fill="#fff" stroke="none" />
      </svg>
    </TaskButton>
    <TaskButton aria-label="360浏览器"><EIcon color="#6cb436" leaf /></TaskButton>
    <TaskButton $line="#2b78b4" aria-label="腾讯会议">
      <svg width="30" height="32" viewBox="0 0 30 32" aria-hidden="true">
        <rect width="30" height="30" rx="4" fill="#1672ec" stroke="none" />
        <path d="M3 20 10 10l5 5 5-5 7 10q-4 2-7-2-3 4-5 1-2 3-5-1-3 4-7 2z" fill="#fff" stroke="none" />
      </svg>
    </TaskButton>
    <Gap $w={2} />
    <TaskButton $bg="#f0a672" $line="#f0701c" $full aria-label="视频">
      <svg width="34" height="34" viewBox="0 0 34 34" aria-hidden="true">
        <circle cx="17" cy="17" r="16" fill="#1c2420" stroke="none" />
        <path d="M6 9q6-6 9-4v9H5zM9 22l4-3 3 3v6l-5 2z" fill="#e3e6e2" stroke="none" />
        <path d="M19 2h4v14h-4z" fill="#4a7a58" stroke="none" />
        <path d="M11 25h5v5h-5z" fill="#d23b2a" stroke="none" />
        <path d="M17 1v32M1 18h32" stroke="#d8cfae" />
        <path d="M20 24h6" stroke="#ddd" />
      </svg>
    </TaskButton>
    <TaskButton $bg="#edf1f8" $line="#2b78b4" $full aria-label="WPS Office">
      <svg width="34" height="32" viewBox="0 0 34 32" aria-hidden="true">
        <path d="M0 2h17l3 14 4-9h-4l-2-5h16l-9 25h-5l-4-12-3 12H8z" fill="#dd322a" stroke="none" />
        <path d="M7 7h7l-3 11z" fill="#edf1f8" stroke="none" />
        <path d="M0 2h17l-1 5H2z" fill="#f0523e" stroke="none" />
      </svg>
    </TaskButton>
    <Spacer />
    <Tray>
      <IconButton aria-label="显示隐藏的图标"><Svg w={18} h={10}><path d="M0 10l9-9 9 9" /></Svg></IconButton>
      <IconButton $w={31} aria-label="麦克风">
        <Svg w={16} h={22}><rect x="4" y="0" width="8" height="15" rx="2" fill="#111" stroke="none" /><path d="M1 9v5q1 4 7 4t7-4V9M8 18v3M4 21h8" /></Svg>
      </IconButton>
      <IconButton aria-label="同步"><Svg><path d="M1 4 21 1v19L1 18zM14 8q-5-2-6 3M8 14q5 2 6-3" /><circle cx="18" cy="18" r="5" fill="#f0a024" stroke="none" /></Svg></IconButton>
      <IconButton aria-label="QQ">
        <Svg w={18}>
          <path d="M4 8q0-8 5-8t5 8q4 5 3 9l-3-1q0 5-5 5t-5-5l-3 1q-1-4 3-9z" fill="#16161a" stroke="none" />
          <ellipse cx="9" cy="15" rx="4" ry="5" fill="#fff" stroke="none" /><path d="M4 10q5 3 10 0" stroke="#dc2b2b" style={{ strokeWidth: 3 }} />
          <path d="M2 21h5M11 21h5" stroke="#e89a1c" style={{ strokeWidth: 2 }} /><path d="M7 6h4" stroke="#f4c02c" />
        </Svg>
      </IconButton>
      <IconButton $w={32} aria-label="360安全卫士">
        <Svg w={20} h={20}><circle cx="10" cy="10" r="9" fill="#f2e01c" stroke="none" /><path d="M2 14Q0 5 8 2M18 6q2 9-6 12" stroke="#24984a" style={{ strokeWidth: 4 }} /><path d="M6 10h8M10 6v8" stroke="#1f8a42" style={{ strokeWidth: 3 }} /></Svg>
      </IconButton>
      <IconButton aria-label="电源"><Svg><path d="M9 5h12v12H7v-4" /><path d="M11 7h8v8h-8z" fill="#111" stroke="none" /><path d="M2 1v3M6 1v3M1 4h6v3q0 2-3 2T1 7zM4 9v8h3" /></Svg></IconButton>
      <IconButton aria-label="无线网络"><Svg w={20} h={20}><path d="M1 18Q3 3 19 2M6 18Q7 8 19 7M10 18q1-6 9-6" /><circle cx="16" cy="17" r="2" fill="currentColor" /></Svg></IconButton>
      <IconButton $w={31} aria-label="音量"><Svg><path d="M1 7h4l5-5v17l-5-5H1zM13 7q2 4 0 7" /><path d="M16 4q4 6 0 13M19 2q5 8 0 17" stroke="#9a9dab" /></Svg></IconButton>
      <IconButton aria-label="输入法"><Svg w={20} h={20}><path d="M8 1h4v4h7v9h-7v5H8v-5H1V5h7z" fill="#fff" stroke="#7d8090" /><path d="M4 8h4v3H4zM12 8h4v3h-4z" fill="#d6dbea" stroke="#7d8090" /></Svg></IconButton>
      <Gap $w={5} />
      <IconButton aria-label="搜狗输入法"><Sogou size={22} /></IconButton>
      <Gap $w={4} />
      <Clock>13:02<br />2022/8/13</Clock>
      <Gap $w={5} />
      <IconButton $w={34} aria-label="通知">
        <Svg w={24} h={24}><path d="M1 1h21v16H12l-4 5v-5H1z" fill="#15161c" stroke="none" /><path d="M5 5h13M5 9h13M5 13h8" stroke="#fff" /><circle cx="17" cy="18" r="5" fill="#15161c" stroke="none" /><path d="M20 14q1 6-5 6" stroke="#fff" /></Svg>
      </IconButton>
      <Gap $w={22} />
      <Rule $h={54} />
      <Gap $w={5} />
    </Tray>
  </TaskBar>
);

export default function App() {
  return (
    <Screen>
      <Global />
      <Desktop>
        <Title />
        <Menu />
        <RibbonBar />
        <Workspace>
          <Document />
          <Side />
          <ImeBar />
        </Workspace>
        <Status />
        <Task />
      </Desktop>
      <Bezel>
        <BezelStrip />
      </Bezel>
    </Screen>
  );
}
